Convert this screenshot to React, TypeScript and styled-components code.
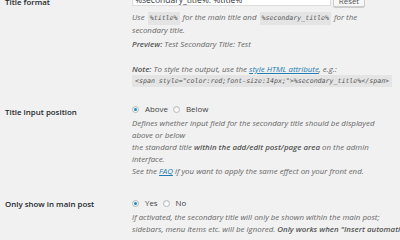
import styled, { createGlobalStyle } from "styled-components"

const Global = createGlobalStyle`
  html, body {
    margin: 0;
    padding: 0;
    background: #f1f1f1;
    overflow: hidden;
  }
  body {
    font-family: 'Open Sans', 'Liberation Sans', sans-serif;
    font-size: 7.9px;
    line-height: 12px;
    color: #444;
  }`

const Page = styled.div`
  width: 400px;
  height: 240px;
  overflow: hidden;`

const Table = styled.div`
  margin-top: -11px;
  padding-left: 5px;
  display: flex;
  flex-direction: column;`

const Row = styled.div<{$gap?: number}>`
  display: grid;
  grid-template-columns: 127px 1fr;
  padding-bottom: ${props => props.$gap ?? 16}px;`

const Label = styled.div<{$top?: number}>`
  font-weight: 600;
  color: #23282d;
  padding-top: ${props => props.$top ?? 2}px;`

const Field = styled.div`
  display: flex;
  flex-direction: column;`

const InputLine = styled.div`
  display: flex;
  align-items: center;
  gap: 2px;
  height: 17px;`

const TextInput = styled.div`
  box-sizing: border-box;
  width: 199px;
  height: 17px;
  background: #fff;
  border: 1px solid #ddd;
  box-shadow: inset 0 1px 2px rgba(0,0,0,.07);
  color: #32373c;
  font-size: 8.5px;
  padding: 4px 2px 0;
  white-space: nowrap;
  overflow: hidden;`

const Button = styled.div`
  box-sizing: border-box;
  width: 32px;
  height: 18px;
  padding-top: 5px;
  text-align: center;
  background: #f7f7f7;
  border: 1px solid #ccc;
  border-radius: 2px;
  box-shadow: 0 1px 0 #ccc;
  color: #555;
  margin-top: 1px;`

const Desc = styled.p<{$top?: number}>`
  margin: ${props => props.$top ?? 0}px 0 0;
  font-style: italic;
  color: #666;
  white-space: nowrap;`

const Code = styled.code<{$block?: boolean}>`
  font-family: 'DejaVu Sans Mono', 'Liberation Mono', monospace;
  font-size: 6.6px;
  font-style: italic;
  background: #e4e4e4;
  color: #555;
  padding: 2px 2px 3px;
  margin: 0 1px;
  ${props => props.$block && `
    display: inline-block;
    margin: 0;
    padding: 0 3px;
    line-height: 12px;
    height: 12px;
  `}`

const Strong = styled.b`
  font-weight: 600;
  color: #555;`

const Link = styled.a`
  color: #1e7cb0;
  text-decoration: underline;`

const Radios = styled.div`
  display: flex;
  align-items: center;
  height: 12px;
  color: #444;`

const RadioItem = styled.label`
  display: flex;
  align-items: center;
  margin-right: 5px;`

const Radio = styled.span<{$checked?: boolean}>`
  box-sizing: border-box;
  width: 7px;
  height: 7px;
  border-radius: 50%;
  border: 1px solid #b4b9be;
  background: #fff;
  box-shadow: inset 0 1px 2px rgba(0,0,0,.1);
  margin-right: 6px;
  display: flex;
  align-items: center;
  justify-content: center;
  &::after {
    content: '';
    width: 3px;
    height: 3px;
    border-radius: 50%;
    background: ${props => props.$checked ? '#1e8cbe' : 'transparent'};
  }`

export default function App() {
  return (
    <Page>
      <Global />
      <Table>
        <Row $gap={16}>
          <Label $top={7}>Title format</Label>
          <Field>
            <InputLine>
              <TextInput>%secondary_title%: %title%</TextInput>
              <Button>Reset</Button>
            </InputLine>
            <Desc $top={5}>
              Use <Code>%title%</Code> for the main title and <Code>%secondary_title%</Code> for the
              <br />secondary title.
            </Desc>
            <Desc $top={2}><Strong>Preview:</Strong> Test Secondary Title: Test</Desc>
            <Desc $top={13}>
              <Strong>Note:</Strong> To style the output, use the <Link>style HTML attribute</Link>, e.g.:
            </Desc>
            <Desc $top={-1}>
              <Code $block>&lt;span style="color:red;font-size:14px;"&gt;%secondary_title%&lt;/span&gt;</Code>
            </Desc>
          </Field>
        </Row>
        <Row $gap={20}>
          <Label $top={3}>Title input position</Label>
          <Field>
            <Radios>
              <RadioItem><Radio $checked />Above</RadioItem>
              <RadioItem><Radio />Below</RadioItem>
            </Radios>
            <Desc $top={2}>
              Defines whether input field for the secondary title should be displayed
              <br />above or below
              <br />the standard title <Strong>within the add/edit post/page area</Strong> on the admin
              <br />interface.
              <br />See the <Link>FAQ</Link> if you want to apply the same effect on your front end.
            </Desc>
          </Field>
        </Row>
        <Row>
          <Label $top={1}>Only show in main post</Label>
          <Field>
            <Radios>
              <RadioItem><Radio $checked />Yes</RadioItem>
              <RadioItem><Radio />No</RadioItem>
            </Radios>
            <Desc $top={2}>
              If activated, the secondary title will only be shown within the main post;
              <br />sidebars, menu items etc. will be ignored. <Strong>Only works when "Insert
              automatically" is enabled.</Strong>
            </Desc>
          </Field>
        </Row>
      </Table>
    </Page>
  )
}
